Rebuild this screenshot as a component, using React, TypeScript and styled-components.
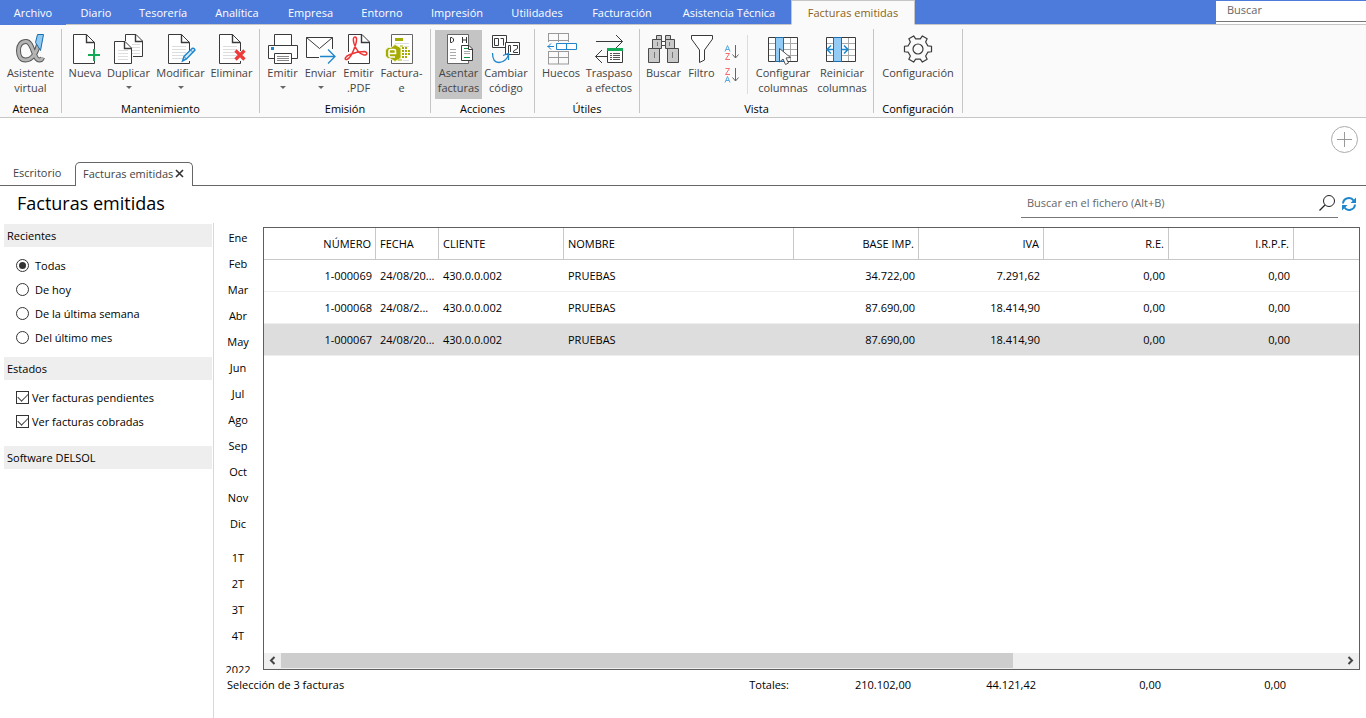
import React from "react";
import styled, { createGlobalStyle, css } from "styled-components";

const GlobalStyle = createGlobalStyle`
  * { box-sizing: border-box; }
  html, body, #root { height: 100%; }
  body {
    margin: 0;
    background: #fff;
    color: #000;
    font: 11px/15px "Open Sans", "Noto Sans", sans-serif;
  }
  button, input { font: inherit; color: inherit; }
`;

const buttonReset = css`
  border: 0;
  margin: 0;
  padding: 0;
  background: none;
  cursor: default;
`;

const Window = styled.div`
  display: flex;
  flex-direction: column;
  height: 100vh;
  overflow: hidden;
`;

/* ---------- menu bar ---------- */

const MenuBar = styled.nav`
  display: flex;
  height: 25px;
  flex: none;
  background: #4d7bdb;
`;

const MenuItem = styled.button<{ $width: number; $kind?: "file" | "active" }>`
  ${buttonReset}
  width: ${(p) => p.$width}px;
  flex: none;
  white-space: nowrap;
  color: #fff;
  border-bottom: 1px solid ${(p) => (p.$kind === "file" ? "#4d7bdb" : "#c6c6c6")};
  ${(p) =>
    p.$kind === "active" &&
    css`
      color: #8a6414;
      background: #fafafa;
      border: 1px solid #c6c6c6;
      border-bottom-color: #fafafa;
    `}
`;

const MenuFill = styled.div`
  flex: 1;
  border-bottom: 1px solid #c6c6c6;
`;

const GlobalSearch = styled.div`
  width: 150px;
  padding-bottom: 2px;
  background: #fff;
  border-top: 1px solid #4d7bdb;
  border-bottom: 1px solid #c6c6c6;
`;

const GlobalSearchInput = styled.input`
  display: block;
  width: 100%;
  height: 21px;
  padding: 0 11px 3px;
  border: 0;
  border-bottom: 1px solid #777;
  background: #fff;
  outline: 0;
  &::placeholder { color: #666; opacity: 1; }
`;

/* ---------- ribbon ---------- */

const RibbonBar = styled.div`
  display: flex;
  flex: none;
  height: 93px;
  padding-top: 4px;
  background: #fafafa;
  border-bottom: 1px solid #c6c6c6;
`;

const Group = styled.section<{ $tight?: boolean }>`
  display: flex;
  flex-direction: column;
  height: 84px;
  padding: 1px ${(p) => (p.$tight ? 2 : 4)}px 0;
  border-right: 1px solid #c6c6c6;
`;

const GroupButtons = styled.div`
  display: flex;
  height: 69px;
`;

const GroupName = styled.div`
  margin-top: 2px;
  height: 15px;
  text-align: center;
  white-space: nowrap;
`;

const Icon = styled.svg.attrs({ "aria-hidden": true })`
  display: block;
  flex: none;
  fill: none;
`;

/* An odd-width button gets one spare pixel so that its icon stays on the pixel grid. */
const Tool = styled.button<{ $width: number; $on?: boolean }>`
  ${buttonReset}
  display: flex;
  flex-direction: column;
  align-items: center;
  width: ${(p) => p.$width}px;
  height: 69px;
  padding-top: 3px;
  color: #444;
  background: ${(p) => (p.$on ? "#c4c4c4" : "transparent")};
  ${Icon} { margin-right: ${(p) => p.$width % 2}px; }
`;

const ToolLabel = styled.span`
  white-space: nowrap;
  text-align: center;
`;

const DropArrow = styled.span`
  margin-top: 6px;
  border: 3px solid transparent;
  border-top-color: #666;
  border-bottom: 0;
`;

const SortStack = styled.div`
  display: flex;
  flex-direction: column;
  align-items: center;
  gap: 6px;
  width: 24px;
  padding-top: 14px;
`;

const SortButton = styled.button`
  ${buttonReset}
  height: 17px;
`;

const ToolDivider = styled.span`
  width: 1px;
  height: 59px;
  margin: 5px 3px 0;
  background: #ddd;
`;

/* ---------- document tabs ---------- */

const TabStrip = styled.div`
  display: flex;
  align-items: flex-end;
  flex: none;
  height: 68px;
  padding-right: 8px;
  border-bottom: 1px solid #666;
`;

const DocTab = styled.div<{ $active?: boolean }>`
  display: flex;
  align-items: center;
  gap: 2px;
  height: 24px;
  margin-bottom: -1px;
  padding: 0 7px 3px;
  white-space: nowrap;
  color: #444;
  ${(p) =>
    p.$active
      ? css`
          width: 118px;
          background: #fff;
          border: 1px solid #666;
          border-bottom: 0;
          border-radius: 5px 5px 0 0;
        `
      : css`
          width: 75px;
          padding-left: 13px;
        `}
`;

const BareButton = styled.button`
  ${buttonReset}
`;

const AddButton = styled.button`
  ${buttonReset}
  align-self: flex-start;
  margin: 8px 0 0 auto;
`;

/* ---------- title row ---------- */

const TitleRow = styled.header`
  display: flex;
  align-items: flex-start;
  flex: none;
  height: 37px;
  padding: 0 9px 0 17px;
`;

const Title = styled.h1`
  flex: 1;
  margin: 0;
  font-size: 18px;
  line-height: 34px;
  font-weight: 400;
`;

const FileSearch = styled.label`
  display: flex;
  align-items: center;
  width: 317px;
  height: 32px;
  padding: 2px 3px 0 6px;
  border-bottom: 1px solid #777;
`;

const FileSearchInput = styled.input`
  flex: 1;
  min-width: 0;
  border: 0;
  padding: 0;
  outline: 0;
  background: none;
  &::placeholder { color: #666; opacity: 1; }
`;

const RefreshButton = styled.button`
  ${buttonReset}
  margin: 10px 0 0 3px;
`;

/* ---------- body ---------- */

const Body = styled.div`
  display: flex;
  flex: 1;
  min-height: 0;
`;

const Sidebar = styled.aside`
  flex: none;
  width: 214px;
  padding: 1px 1px 0 4px;
  border-right: 1px solid #d8d8d8;
`;

const PanelTitle = styled.h2`
  margin: 0;
  height: 23px;
  padding-left: 3px;
  font-size: 11px;
  line-height: 23px;
  font-weight: 400;
  background: #eee;
`;

const OptionList = styled.div<{ $dense?: boolean }>`
  padding: ${(p) => (p.$dense ? "5px 12px 13px" : "6px 12px 8px")};
`;

const Option = styled.label<{ $gap: number }>`
  display: flex;
  align-items: center;
  gap: ${(p) => p.$gap}px;
  height: 24px;
  white-space: nowrap;
`;

const Radio = styled.input.attrs({ type: "radio" })`
  appearance: none;
  display: grid;
  place-items: center;
  width: 13px;
  height: 13px;
  margin: 0;
  border: 1px solid #333;
  border-radius: 50%;
  background: #fff;
  &:checked::after {
    content: "";
    width: 7px;
    height: 7px;
    border-radius: 50%;
    background: #333;
  }
`;

const Check = styled.input.attrs({ type: "checkbox" })`
  appearance: none;
  display: grid;
  place-items: center;
  width: 13px;
  height: 13px;
  margin: 0;
  border: 1px solid #333;
  background: #fff;
  &:checked::after {
    content: "";
    width: 9px;
    height: 5px;
    margin-bottom: 3px;
    border: solid #444;
    border-width: 0 0 1px 1px;
    transform: rotate(-45deg);
  }
`;

const Content = styled.main`
  display: flex;
  flex-direction: column;
  flex: 1;
  min-width: 0;
`;

const Upper = styled.div`
  display: flex;
  flex: 1;
  min-height: 0;
  padding-right: 6px;
`;

const Periods = styled.div`
  display: flex;
  flex-direction: column;
  flex: none;
  gap: 8px;
  width: 49px;
  padding: 1px 1px 0 0;
  overflow: hidden;
`;

const PeriodGroup = styled.div`
  display: flex;
  flex-direction: column;
  flex: none;
`;

const Period = styled.button`
  ${buttonReset}
  height: 26px;
`;

const GridPanel = styled.div`
  display: flex;
  flex-direction: column;
  flex: 1;
  min-width: 0;
  margin: 4px 0 3px;
  border: 1px solid #5f5f5f;
`;

const GridView = styled.div`
  flex: 1;
  overflow: hidden;
`;

const DataTable = styled.table`
  width: 100%;
  table-layout: fixed;
  border-collapse: separate;
  border-spacing: 0;
`;

type Align = "left" | "right";

const Th = styled.th<{ $align: Align }>`
  height: 32px;
  padding: 0 4px;
  font-weight: 400;
  text-align: ${(p) => p.$align};
  border-right: 1px solid #c8c8c8;
  border-bottom: 1px solid #c8c8c8;
  &:last-child { border-right: 0; }
`;

const Td = styled.td<{ $align: Align }>`
  height: 32px;
  padding: 0 4px;
  text-align: ${(p) => p.$align};
  white-space: nowrap;
  border-bottom: 1px solid #eee;
`;

const Row = styled.tr<{ $selected?: boolean }>`
  background: ${(p) => (p.$selected ? "#ddd" : "#fff")};
`;

const ScrollBar = styled.div`
  display: flex;
  flex: none;
  height: 16px;
  padding-bottom: 1px;
  background: #efefef;
`;

const ScrollButton = styled.button`
  ${buttonReset}
  display: grid;
  place-items: center;
  width: 17px;
`;

const ScrollTrack = styled.div`
  flex: 1;
`;

const ScrollThumb = styled.div`
  width: 69%;
  height: 100%;
  background: #cdcdcd;
`;

const Footer = styled.footer`
  display: grid;
  grid-template-columns: 580px repeat(4, 125px) 1fr;
  flex: none;
  height: 45px;
  padding-top: 4px;
`;

const FooterStart = styled.div`
  display: flex;
  justify-content: space-between;
  padding: 0 5px 0 13px;
`;

const Total = styled.div`
  padding-right: 8px;
  text-align: right;
`;

/* ---------- icons ---------- */

const INK = "#3a3a3a";
const BLUE = "#1f86cc";
const OLIVE = "#a5ab00";

const Icon32 = ({ children }: { children: React.ReactNode }) => (
  <Icon width="32" height="32" viewBox="0 0 32 32">
    {children}
  </Icon>
);

const PageLines = ({ x = 8, y = 13, w = 14, n = 5 }) => (
  <>
    {Array.from({ length: n }, (_, i) => (
      <path key={i} d={`M${x} ${y + i * 3}.5h${w}`} stroke="#ddd" />
    ))}
  </>
);

const PageShape = () => (
  <>
    <path d="M25.5 18V9.5L17.5 1.5H4.5V30.5H25.5V28" stroke={INK} fill="#fff" />
    <path d="M17.5 1.5V9.5H25.5" stroke={INK} strokeWidth="1.4" />
  </>
);

const alphaPath =
  "M25 9C23 20 18 27 11.5 27C7 27 4.500 23.500 4.500 17.500C4.500 12 7.500 8.500 12 8.500C19.500 8.500 19 27 25.500 27C27 27 28 26 28.500 24.500";

const AlphaIcon = () => (
  <Icon32>
    <path d={alphaPath} stroke="#555" strokeWidth="5" />
    <path d={alphaPath} stroke="#b4b4b4" strokeWidth="3" />
    <path d="M23.500 1.500H29.500L26.500 17.500L21.500 9.500Z" fill="#90caf3" stroke="#1b6dab" />
  </Icon32>
);

const NewIcon = () => (
  <Icon32>
    <PageShape />
    <path d="M19 22h12M25 16v12" stroke="#12a957" strokeWidth="2" />
  </Icon32>
);

const DuplicateIcon = () => (
  <Icon32>
    <path d="M13.500 8V1.500H24L30.500 8V23.500H21" stroke={INK} fill="#fff" />
    <path d="M23.500 1.500V8.500H30.500" stroke={INK} strokeWidth="1.400" />
    <PageLines x={20} y={11} w={8} n={4} />
    <path d="M2.500 8.500H13L19.500 15V30.500H2.500Z" stroke={INK} fill="#fff" />
    <path d="M12.500 8.500V15.500H19.500" stroke={INK} strokeWidth="1.400" />
    <PageLines x={6} y={17} w={10} n={4} />
  </Icon32>
);

const EditIcon = () => (
  <Icon32>
    <PageShape />
    <PageLines />
    <path d="M18.500 28L20 23.500L28 15.500Q30 14.500 31 17L22.500 26Z" stroke={BLUE} strokeWidth="1.400" fill="#cfe8fa" />
    <path d="M20 23.500L22.500 26M26.500 17L29 19.500" stroke={BLUE} />
  </Icon32>
);

const DeleteIcon = () => (
  <Icon32>
    <PageShape />
    <PageLines />
    <path d="M20.500 17.500L29.500 26.500M29.500 17.500L20.500 26.500" stroke="#ee3a3a" strokeWidth="3.200" />
  </Icon32>
);

const PrintIcon = () => (
  <Icon32>
    <path d="M8.500 12.500V1.500H25.500V12.500" stroke={INK} fill="#fff" />
    <path d="M2.500 12.500H31.500V25.500H2.500Z" stroke={INK} fill="#fff" />
    <path d="M5 14h3v3H5z" fill={BLUE} />
    <path d="M8.500 20.500H25.500V30.500H8.500Z" stroke={INK} fill="#fff" />
    <path d="M11 23.500H23M11 25.500H23M11 27.500H23" stroke="#888" />
  </Icon32>
);

const SendIcon = () => (
  <Icon32>
    <path d="M16 24.500H2.500V4.500H28.500V16" fill="#fff" />
    <path d="M15 24.500H2.500V4.500H28.500V16" stroke={INK} />
    <path d="M2.500 4.500L15.500 15.500L28.500 4.500" stroke={INK} />
    <path d="M16 23.500H31M24 16.500L31 23.500L24 30.500" stroke={BLUE} strokeWidth="1.300" />
  </Icon32>
);

const PdfIcon = () => (
  <Icon32>
    <path d="M6.500 1.500H20L27.500 9V30.500H6.500Z" fill="#fff" />
    <path d="M6.500 19V1.500H20L27.500 9V30.500H6.500V28" stroke={INK} />
    <path d="M19.500 1.500V9.500H27.500" stroke={INK} strokeWidth="1.400" />
    <path
      d="M13 4C15.500 4 14.500 9 13.500 12C11.500 18 8 25.500 5 26.500C2 27 2.500 23.500 8 21.500C12.500 19.500 18.500 18.500 22 18.500C26 19 25.500 22.500 22 22C17 21 13.500 15 12 10.500C11 7 11 4 13 4Z"
      stroke="#ee3535"
      strokeWidth="1.500"
    />
  </Icon32>
);

const FacturaEIcon = () => (
  <Icon32>
    <path d="M6.500 1.500H27.500V30.500H6.500Z" stroke="#666" fill="#fff" />
    <path d="M10 5h8v3h-8z" fill={OLIVE} />
    <path d="M10 10.500h14M19 13.500h5M18 27.500h6" stroke="#ddd" />
    <path d="M10 11.500L16 15V25L10 28.500L5 25.500H3L.5 23V17L3 14.500H6Z" fill={OLIVE} stroke="#f2f2c8" />
    <path d="M4 20.500H10.500V18Q10.500 16.500 9 16.500H5.500Q4 16.500 4 18V22.500Q4 24 5.500 24H10" stroke="#fff" strokeWidth="1.600" />
    <path d="M17 15h6M17 18h8M17 21h8M17 24h5" stroke={OLIVE} strokeWidth="2" strokeDasharray="2 1" />
    <path d="M13 27h4M15 13h3" stroke={OLIVE} strokeWidth="1" />
  </Icon32>
);

const PostIcon = () => (
  <Icon32>
    <path d="M5.500 1.500H26.500V30.500H5.500Z" stroke="#666" fill="#fff" />
    <path d="M8.500 4.500V9.500H10L11.500 8V6L10 4.500ZM20.500 4V10M24.500 4V10M20.500 7H24.500" stroke="#333" />
    <path d="M8 16.500h6M8 19.500h6M8 22.500h6M8 25.500h6" stroke="#aaa" />
    <path d="M19.500 12.500H27L30.500 16V27.500H19.500Z" stroke={INK} fill="#fff" />
    <path d="M26.500 12.500V16.500H30.500" stroke={INK} />
    <path d="M22 15.500h4M22 24.500h6" stroke="#0b9444" />
    <path d="M22 18.500h6M22 20.500h6" stroke="#aaa" />
  </Icon32>
);

const CodeIcon = () => (
  <Icon32>
    <path d="M2.500 2.500H16.500V14.500H2.500Z" stroke={INK} fill="#fff" />
    <path d="M4.500 5.500H8.500V12.500H4.500ZM10.500 5.500H13.500V12.500" stroke={INK} />
    <path d="M15.500 9.500H29.500V21.500H15.500Z" stroke={INK} fill="#fff" />
    <path d="M18.500 21V12.500H20.500V19M23 12.500H27.500V15.500L23.500 18V19.500H28" stroke={INK} />
    <path d="M2.500 20C2.500 26 5 29.500 9 29.500C14 29.500 18 25 18.500 21M13 22.500L18.500 20.500V27" stroke={BLUE} strokeWidth="1.300" />
  </Icon32>
);

const GapsIcon = () => (
  <Icon32>
    <path d="M3 .5H24M3 7.500H24M3.500 0V9M13.500 0V9M23.500 0V9M3 18.500H24M3 24.500H24M3 31H24M3.500 18V31M13.500 18V31M23.500 18V31" stroke="#999" />
    <path d="M11.500 10.500H31.500V16.500H11.500ZM21.500 10.500V16.500" stroke={BLUE} fill="#fff" />
    <path d="M2.500 13.500H9M6 10.500L3 13.500L6 16.500" stroke={BLUE} />
  </Icon32>
);

const TransferIcon = () => (
  <Icon32>
    <path d="M3 8.500H29.500M23 2L29.500 8.500L23 15" stroke={INK} />
    <path d="M14 23.500H2.500M9 17L2.500 23.500L9 30" stroke={INK} />
    <path d="M14.500 16.500H29.500V29.500H14.500Z" stroke={INK} fill="#fff" />
    <path d="M14 16.500H30" stroke="#12a957" strokeWidth="3" />
    <path d="M17 20.500h2M17 22.500h2M17 24.500h2M17 26.500h2M20 20.500h7M20 22.500h7M20 24.500h7M20 26.500h7" stroke="#555" />
  </Icon32>
);

const BinocularsIcon = () => (
  <Icon32>
    <path d="M9.500 2.500H14.500V6.500H9.500ZM18.500 2.500H23.500V6.500H18.500ZM5.500 6.500H14.500V15.500H5.500ZM18.500 6.500H27.500V15.500H18.500ZM1.500 15.500H12.500V29.500H1.500ZM20.500 15.500H31.500V29.500H20.500Z" fill="#c9c9c9" stroke="#4a4a4a" />
    <path d="M14.500 8.500H18.500V12.500H14.500Z" fill="#fff" stroke="#4a4a4a" />
    <path d="M10.500 9V13M22.500 9V13M7.500 19V25M25.500 19V25" stroke="#777" />
  </Icon32>
);

const FilterIcon = () => (
  <Icon32>
    <path d="M6.500 2.500H27.500V6L19.500 17V27L14.500 29.500V17L6.500 6Z" stroke={INK} fill="#fff" />
  </Icon32>
);

const SortIcon = ({ desc }: { desc?: boolean }) => (
  <Icon width="16" height="17" viewBox="0 0 16 17">
    <path d="M1 7.500L3.500 1.500L6 7.500M2 5.500H5" transform={desc ? "translate(0 8)" : undefined} stroke="#5aa9dd" />
    <path d="M1.500 9.500H5.500L1.500 15.500H6" transform={desc ? "translate(0 -8)" : undefined} stroke="#f26d6d" />
    <path d="M11.500 1V14M8.500 10.500L11.500 14L14.500 10.500" stroke="#666" />
  </Icon>
);

const ColumnGrid = () => (
  <>
    <path d="M1.500 4.500H30.500V28.500H1.500Z" fill="#fff" />
    <path d="M2 10.500H30M2 16.500H30M2 22.500H30M23.500 5V28" stroke="#aaa" />
    <path d="M1.500 4.500H30.500V28.500H1.500Z" stroke={INK} />
    <path d="M8.500 4.500H16.500V28.500H8.500Z" fill="#92cbf5" stroke="#1b6dab" />
  </>
);

const ColumnsIcon = () => (
  <Icon32>
    <ColumnGrid />
    <path d="M12.500 15.500V29L16 26L18.500 31.500L21.500 30L19 25L23.500 24.500Z" fill="#fff" stroke="#555" />
  </Icon32>
);

const ResetColumnsIcon = () => (
  <Icon width="32" height="32" viewBox="1 0 32 32">
    <ColumnGrid />
    <path d="M2.500 16.500H8M6 12.500L2 16.500L6 20.500M17 16.500H22.500M19 12.500L23 16.500L19 20.500" stroke={BLUE} strokeWidth="1.500" />
  </Icon>
);

const gearPath = (() => {
  const pts: string[] = [];
  for (let i = 0; i < 6; i++) {
    const base = (i * Math.PI) / 3;
    [[-0.3, 10.4], [-0.2, 13.8], [0.2, 13.8], [0.3, 10.4]].forEach(([a, r]) => {
      pts.push(`${(16 + r * Math.cos(base + a)).toFixed(2)} ${(16 + r * Math.sin(base + a)).toFixed(2)}`);
    });
  }
  return `M${pts.join("L")}Z`;
})();

const GearIcon = () => (
  <Icon32>
    <path d={gearPath} stroke={INK} strokeWidth="1.200" strokeLinejoin="round" />
    <circle cx="16" cy="16" r="5" stroke={INK} strokeWidth="1.200" />
  </Icon32>
);

const CloseIcon = () => (
  <Icon width="9" height="9" viewBox="0 0 9 9">
    <path d="M1 1L8 8M8 1L1 8" stroke="#333" strokeWidth="1.600" />
  </Icon>
);

const AddIcon = () => (
  <Icon width="27" height="27" viewBox="0 0 27 27">
    <circle cx="13.500" cy="13.500" r="13" stroke="#aaa" />
    <path d="M6 13.500H21M13.500 6V21" stroke="#999" />
  </Icon>
);

const LensIcon = () => (
  <Icon width="16" height="16" viewBox="0 0 16 16">
    <circle cx="10" cy="6" r="5.500" stroke="#222" />
    <path d="M6 10L.5 15.500" stroke="#222" strokeWidth="1.200" />
  </Icon>
);

const RefreshIcon = () => (
  <Icon width="16" height="16" viewBox="0 0 16 16">
    <path d="M2 7.500C2.500 1.500 10 .5 12.500 4.500M14 8.500C13.500 14.500 6 15.500 3.500 11.500" stroke={BLUE} strokeWidth="2" />
    <path d="M15 1.500V7H9.500ZM1 14.500V9H6.500Z" fill={BLUE} />
  </Icon>
);

const Chevron = ({ right }: { right?: boolean }) => (
  <Icon width="7" height="9" viewBox="0 0 7 9">
    <path d={right ? "M1.500 1L5 4.500L1.500 8" : "M5.500 1L2 4.500L5.500 8"} stroke="#444" strokeWidth="2" />
  </Icon>
);

/* ---------- data ---------- */

const menu: [string, number][] = [
  ["Diario", 60],
  ["Tesorería", 74],
  ["Analítica", 74],
  ["Empresa", 73],
  ["Entorno", 70],
  ["Impresión", 80],
  ["Utilidades", 80],
  ["Facturación", 90],
  ["Asistencia Técnica", 124],
];

const months = ["Ene", "Feb", "Mar", "Abr", "May", "Jun", "Jul", "Ago", "Sep", "Oct", "Nov", "Dic"];
const quarters = ["1T", "2T", "3T", "4T"];
const ranges = ["Todas", "De hoy", "De la última semana", "Del último mes"];

const columns: { name: string; align: Align; width?: number }[] = [
  { name: "NÚMERO", align: "right", width: 112 },
  { name: "FECHA", align: "left", width: 63 },
  { name: "CLIENTE", align: "left", width: 125 },
  { name: "NOMBRE", align: "left", width: 230 },
  { name: "BASE IMP.", align: "right", width: 125 },
  { name: "IVA", align: "right", width: 125 },
  { name: "R.E.", align: "right", width: 125 },
  { name: "I.R.P.F.", align: "right", width: 125 },
  { name: "", align: "left" },
];

const invoices = [
  ["1-000069", "24/08/20...", "430.0.0.002", "PRUEBAS", "34.722,00", "7.291,62", "0,00", "0,00", ""],
  ["1-000068", "24/08/2...", "430.0.0.002", "PRUEBAS", "87.690,00", "18.414,90", "0,00", "0,00", ""],
  ["1-000067", "24/08/20...", "430.0.0.002", "PRUEBAS", "87.690,00", "18.414,90", "0,00", "0,00", ""],
];

/* ---------- composed parts ---------- */

type ToolProps = {
  icon: React.ReactNode;
  lines: string[];
  width: number;
  menu?: boolean;
  on?: boolean;
};

const RibbonTool = ({ icon, lines, width, menu: hasMenu, on }: ToolProps) => (
  <Tool $width={width} $on={on}>
    {icon}
    {lines.map((line) => (
      <ToolLabel key={line}>{line}</ToolLabel>
    ))}
    {hasMenu && <DropArrow />}
  </Tool>
);

const RibbonGroup = ({ name, tight, children }: { name: string; tight?: boolean; children: React.ReactNode }) => (
  <Group $tight={tight} aria-label={name}>
    <GroupButtons>{children}</GroupButtons>
    <GroupName>{name}</GroupName>
  </Group>
);

export default function App() {
  return (
    <Window>
      <GlobalStyle />
      <MenuBar>
        <MenuItem $width={66} $kind="file">Archivo</MenuItem>
        {menu.map(([name, width]) => (
          <MenuItem key={name} $width={width}>{name}</MenuItem>
        ))}
        <MenuItem $width={124} $kind="active">Facturas emitidas</MenuItem>
        <MenuFill />
        <GlobalSearch>
          <GlobalSearchInput type="search" placeholder="Buscar" aria-label="Buscar" />
        </GlobalSearch>
      </MenuBar>

      <RibbonBar>
        <RibbonGroup name="Atenea" tight>
          <RibbonTool icon={<AlphaIcon />} lines={["Asistente", "virtual"]} width={57} />
        </RibbonGroup>
        <RibbonGroup name="Mantenimiento">
          <RibbonTool icon={<NewIcon />} lines={["Nueva"]} width={38} />
          <RibbonTool icon={<DuplicateIcon />} lines={["Duplicar"]} width={49} menu />
          <RibbonTool icon={<EditIcon />} lines={["Modificar"]} width={55} menu />
          <RibbonTool icon={<DeleteIcon />} lines={["Eliminar"]} width={47} />
        </RibbonGroup>
        <RibbonGroup name="Emisión">
          <RibbonTool icon={<PrintIcon />} lines={["Emitir"]} width={37} menu />
          <RibbonTool icon={<SendIcon />} lines={["Enviar"]} width={39} menu />
          <RibbonTool icon={<PdfIcon />} lines={["Emitir", ".PDF"]} width={37} />
          <RibbonTool icon={<FacturaEIcon />} lines={["Factura-", "e"]} width={49} />
        </RibbonGroup>
        <RibbonGroup name="Acciones">
          <RibbonTool icon={<PostIcon />} lines={["Asentar", "facturas"]} width={47} on />
          <RibbonTool icon={<CodeIcon />} lines={["Cambiar", "código"]} width={48} />
        </RibbonGroup>
        <RibbonGroup name="Útiles">
          <RibbonTool icon={<GapsIcon />} lines={["Huecos"]} width={44} />
          <RibbonTool icon={<TransferIcon />} lines={["Traspaso", "a efectos"]} width={52} />
        </RibbonGroup>
        <RibbonGroup name="Vista">
          <RibbonTool icon={<BinocularsIcon />} lines={["Buscar"]} width={39} />
          <RibbonTool icon={<FilterIcon />} lines={["Filtro"]} width={37} />
          <SortStack>
            <SortButton aria-label="Orden ascendente"><SortIcon /></SortButton>
            <SortButton aria-label="Orden descendente"><SortIcon desc /></SortButton>
          </SortStack>
          <ToolDivider />
          <RibbonTool icon={<ColumnsIcon />} lines={["Configurar", "columnas"]} width={64} />
          <RibbonTool icon={<ResetColumnsIcon />} lines={["Reiniciar", "columnas"]} width={54} />
        </RibbonGroup>
        <RibbonGroup name="Configuración">
          <RibbonTool icon={<GearIcon />} lines={["Configuración"]} width={80} />
        </RibbonGroup>
      </RibbonBar>

      <TabStrip>
        <DocTab><BareButton>Escritorio</BareButton></DocTab>
        <DocTab $active>
          <BareButton>Facturas emitidas</BareButton>
          <BareButton aria-label="Cerrar"><CloseIcon /></BareButton>
        </DocTab>
        <AddButton aria-label="Añadir"><AddIcon /></AddButton>
      </TabStrip>

      <TitleRow>
        <Title>Facturas emitidas</Title>
        <FileSearch>
          <FileSearchInput type="text" placeholder="Buscar en el fichero (Alt+B)" aria-label="Buscar en el fichero" />
          <LensIcon />
        </FileSearch>
        <RefreshButton aria-label="Actualizar"><RefreshIcon /></RefreshButton>
      </TitleRow>

      <Body>
        <Sidebar>
          <PanelTitle>Recientes</PanelTitle>
          <OptionList>
            {ranges.map((name, i) => (
              <Option key={name} $gap={6}>
                <Radio name="range" defaultChecked={i === 0} />
                {name}
              </Option>
            ))}
          </OptionList>
          <PanelTitle>Estados</PanelTitle>
          <OptionList $dense>
            <Option $gap={3}><Check defaultChecked />Ver facturas pendientes</Option>
            <Option $gap={3}><Check defaultChecked />Ver facturas cobradas</Option>
          </OptionList>
          <PanelTitle>Software DELSOL</PanelTitle>
        </Sidebar>

        <Content>
          <Upper>
            <Periods>
              <PeriodGroup>
                {months.map((m) => <Period key={m}>{m}</Period>)}
              </PeriodGroup>
              <PeriodGroup>
                {quarters.map((q) => <Period key={q}>{q}</Period>)}
              </PeriodGroup>
              <PeriodGroup><Period>2022</Period></PeriodGroup>
            </Periods>
            <GridPanel>
              <GridView>
                <DataTable>
                  <colgroup>
                    {columns.map((c) => <col key={c.name} width={c.width} />)}
                  </colgroup>
                  <thead>
                    <tr>
                      {columns.map((c) => <Th key={c.name} $align={c.align}>{c.name}</Th>)}
                    </tr>
                  </thead>
                  <tbody>
                    {invoices.map((cells, r) => (
                      <Row key={cells[0]} $selected={r === 2}>
                        {cells.map((cell, i) => <Td key={i} $align={columns[i].align}>{cell}</Td>)}
                      </Row>
                    ))}
                  </tbody>
                </DataTable>
              </GridView>
              <ScrollBar>
                <ScrollButton aria-label="Desplazar a la izquierda"><Chevron /></ScrollButton>
                <ScrollTrack><ScrollThumb /></ScrollTrack>
                <ScrollButton aria-label="Desplazar a la derecha"><Chevron right /></ScrollButton>
              </ScrollBar>
            </GridPanel>
          </Upper>
          <Footer>
            <FooterStart>
              <span>Selección de 3 facturas</span>
              <span>Totales:</span>
            </FooterStart>
            <Total>210.102,00</Total>
            <Total>44.121,42</Total>
            <Total>0,00</Total>
            <Total>0,00</Total>
          </Footer>
        </Content>
      </Body>
    </Window>
  );
}
